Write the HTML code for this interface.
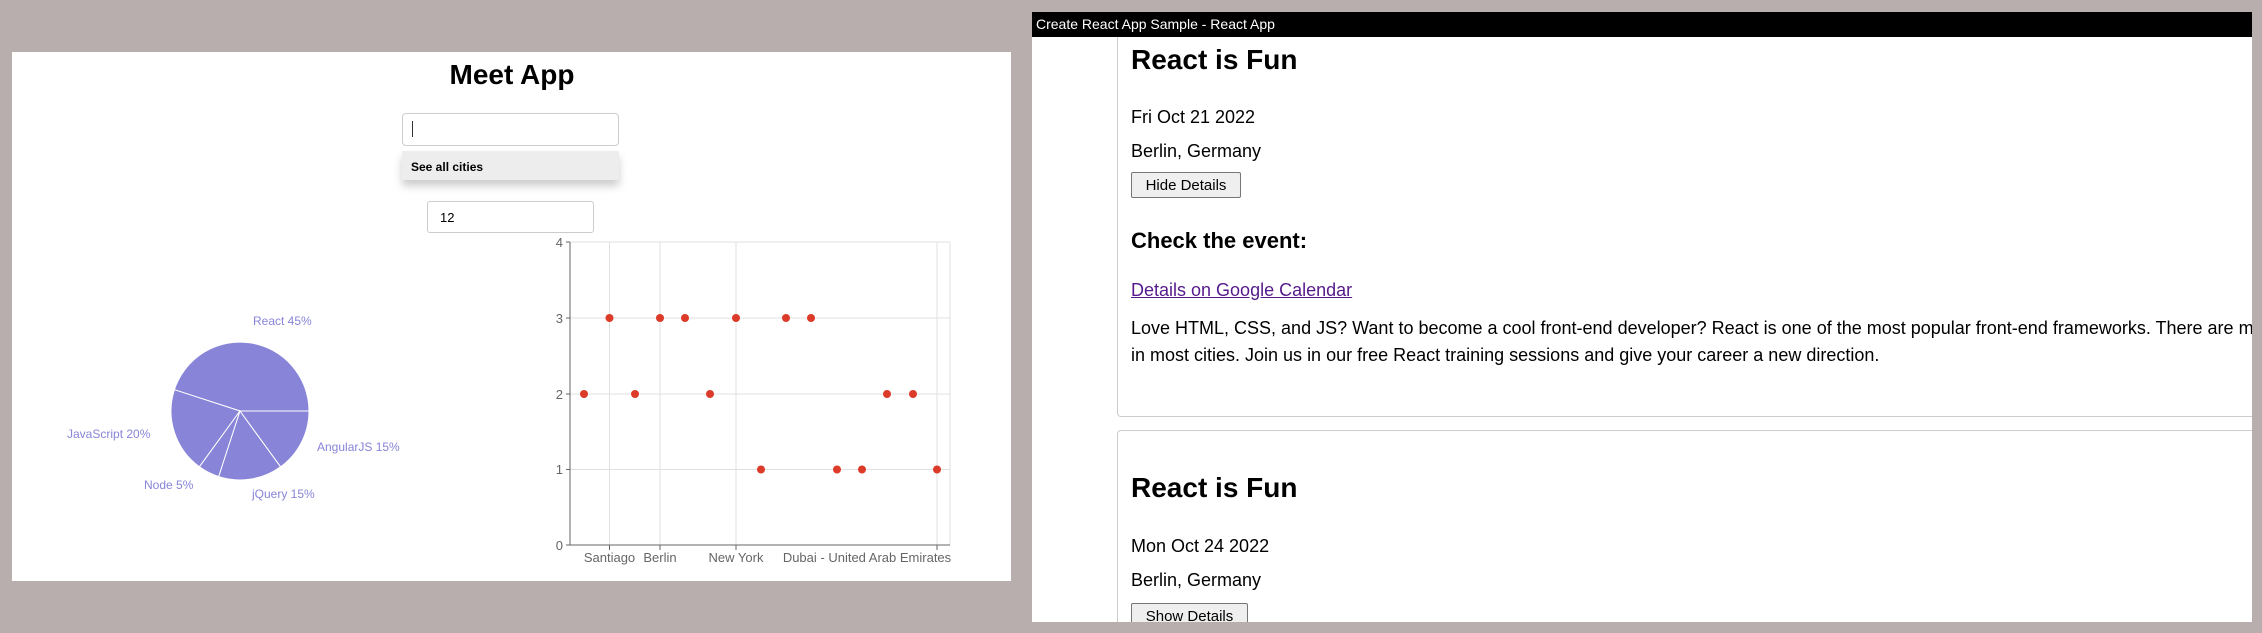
<!DOCTYPE html>
<html><head><meta charset="utf-8"><style>
*{margin:0;padding:0;box-sizing:border-box}
html{width:2262px;height:633px;overflow:hidden}
body{width:2262px;height:633px;background:#b9aeae;position:relative;overflow:hidden;font-family:"Liberation Sans",sans-serif}
.a{position:absolute;white-space:nowrap}
</style></head><body>
<div class="a" style="left:12px;top:52px;width:999px;height:529px;background:#fff"></div>
<div class="a" style="left:0;top:59px;width:1024px;text-align:center;font-weight:bold;font-size:28px">Meet App</div>
<div class="a" style="left:402px;top:113px;width:217px;height:33px;border:1px solid #ccc;border-radius:4px;background:#fff"></div>
<div class="a" style="left:412px;top:121px;width:1px;height:16px;background:#333"></div>
<div class="a" style="left:402px;top:151px;width:217px;height:29px;background:#ededed;box-shadow:0 6px 8px rgba(0,0,0,.2);font-size:12px;font-weight:bold;padding:9px 0 0 9px">See all cities</div>
<div class="a" style="left:427px;top:201px;width:167px;height:32px;border:1px solid #ccc;border-radius:3px;font-size:13px;padding:8px 0 0 12px">12</div>
<svg class="a" style="left:0;top:0" width="1020" height="633">
<g stroke="#e0e0e0" stroke-width="1">
<line x1="570" y1="242" x2="950" y2="242"/><line x1="570" y1="318" x2="950" y2="318"/><line x1="570" y1="394" x2="950" y2="394"/><line x1="570" y1="469.5" x2="950" y2="469.5"/>
<line x1="609.5" y1="242" x2="609.5" y2="545"/><line x1="660" y1="242" x2="660" y2="545"/><line x1="736" y1="242" x2="736" y2="545"/><line x1="937" y1="242" x2="937" y2="545"/><line x1="950" y1="242" x2="950" y2="545"/>
</g>
<g stroke="#666"><line x1="570" y1="242" x2="570" y2="545"/><line x1="570" y1="545" x2="950" y2="545"/>
<line x1="566" y1="242" x2="570" y2="242"/><line x1="566" y1="318" x2="570" y2="318"/><line x1="566" y1="394" x2="570" y2="394"/><line x1="566" y1="469.5" x2="570" y2="469.5"/><line x1="566" y1="545" x2="570" y2="545"/>
<line x1="609.5" y1="545" x2="609.5" y2="550"/><line x1="660" y1="545" x2="660" y2="550"/><line x1="736" y1="545" x2="736" y2="550"/><line x1="937" y1="545" x2="937" y2="550"/></g>
<g fill="#666" font-size="13" font-family="Liberation Sans" text-anchor="end">
<text x="563" y="247">4</text><text x="563" y="323">3</text><text x="563" y="399">2</text><text x="563" y="474">1</text><text x="563" y="550">0</text></g>
<g fill="#666" font-size="13" font-family="Liberation Sans" text-anchor="middle">
<text x="609.5" y="562">Santiago</text><text x="660" y="562">Berlin</text><text x="736" y="562">New York</text><text x="867" y="562">Dubai - United Arab Emirates</text></g>
<g fill="#dd3b2a">
<circle cx="584" cy="394" r="4"/><circle cx="609.5" cy="318" r="4"/><circle cx="635" cy="394" r="4"/><circle cx="660" cy="318" r="4"/><circle cx="685" cy="318" r="4"/><circle cx="710" cy="394" r="4"/><circle cx="736" cy="318" r="4"/><circle cx="761" cy="469.5" r="4"/><circle cx="786" cy="318" r="4"/><circle cx="811" cy="318" r="4"/><circle cx="837" cy="469.5" r="4"/><circle cx="862" cy="469.5" r="4"/><circle cx="887" cy="394" r="4"/><circle cx="913" cy="394" r="4"/><circle cx="937" cy="469.5" r="4"/></g>
<g fill="#8884d8" stroke="#fff" stroke-width="1">
<path d="M240 411 L309 411 A69 69 0 0 0 174.4 389.7 Z"/>
<path d="M240 411 L174.4 389.7 A69 69 0 0 0 199.4 466.8 Z"/>
<path d="M240 411 L199.4 466.8 A69 69 0 0 0 218.7 476.6 Z"/>
<path d="M240 411 L218.7 476.6 A69 69 0 0 0 280.6 466.8 Z"/>
<path d="M240 411 L280.6 466.8 A69 69 0 0 0 309 411 Z"/></g>
<g fill="#8884d8" font-size="12" font-family="Liberation Sans">
<text x="253" y="325">React 45%</text><text x="67" y="438">JavaScript 20%</text><text x="317" y="451">AngularJS 15%</text><text x="144" y="489">Node 5%</text><text x="252" y="498">jQuery 15%</text></g>
</svg>
<div class="a" style="left:1032px;top:12px;width:1220px;height:610px;background:#fff;overflow:hidden">
<div class="a" style="left:85px;top:0;width:1200px;height:405px;border:1px solid #ccc;border-radius:4px;border-top:none"></div>
<div class="a" style="left:85px;top:418px;width:1200px;height:250px;border:1px solid #ccc;border-radius:4px"></div>
<div class="a" style="left:0;top:0;width:1220px;height:25px;background:#000;color:#fff;font-size:14px;padding:4px 0 0 4px">Create React App Sample - React App</div>
<div class="a" style="left:99px;top:32px;font-size:28px;font-weight:bold">React is Fun</div>
<div class="a" style="left:99px;top:95px;font-size:18px">Fri Oct 21 2022</div>
<div class="a" style="left:99px;top:129px;font-size:18px">Berlin, Germany</div>
<div class="a" style="left:99px;top:160px;width:110px;height:26px;border:1px solid #767676;border-radius:2px;background:#efefef;font-size:15px;text-align:center;padding-top:4px">Hide Details</div>
<div class="a" style="left:99px;top:216px;font-size:22px;font-weight:bold">Check the event:</div>
<div class="a" style="left:99px;top:268px;font-size:18px;color:#551a8b;text-decoration:underline">Details on Google Calendar</div>
<div class="a" style="left:99px;top:303px;font-size:18px;line-height:27px">Love HTML, CSS, and JS? Want to become a cool front-end developer? React is one of the most popular front-end frameworks. There are many jobs<br>in most cities. Join us in our free React training sessions and give your career a new direction.</div>
<div class="a" style="left:99px;top:460px;font-size:28px;font-weight:bold">React is Fun</div>
<div class="a" style="left:99px;top:524px;font-size:18px">Mon Oct 24 2022</div>
<div class="a" style="left:99px;top:558px;font-size:18px">Berlin, Germany</div>
<div class="a" style="left:99px;top:591px;width:117px;height:26px;border:1px solid #767676;border-radius:2px;background:#efefef;font-size:15px;text-align:center;padding-top:4px">Show Details</div>
</div>
</body></html>
